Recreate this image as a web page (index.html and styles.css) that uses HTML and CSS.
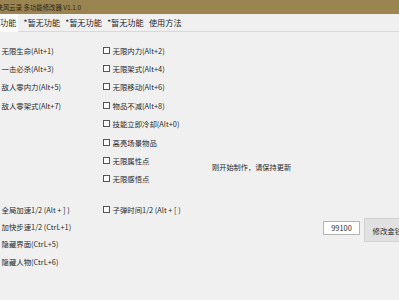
FILE: index.html
```html
<!DOCTYPE html>
<html lang="zh">
<head>
<meta charset="utf-8">
<link rel="stylesheet" href="styles.css">
</head>
<body>
<div class="window">
  <div class="titlebar"><span class="title">侠风云录 多功能修改器 V1.1.0</span></div>
  <div class="tabs">
    <div class="tab active">功能</div>
    <div class="tab">*暂无功能</div>
    <div class="tab">*暂无功能</div>
    <div class="tab">*暂无功能</div>
    <div class="tab">使用方法</div>
  </div>
  <div class="content">
    <div class="section s1">
      <div class="col col1">
        <div class="row">无限生命(Alt+1)</div>
        <div class="row">一击必杀(Alt+3)</div>
        <div class="row">敌人零内力(Alt+5)</div>
        <div class="row">敌人零架式(Alt+7)</div>
      </div>
      <div class="col col2">
        <label class="row"><span class="box"></span>无限内力(Alt+2)</label>
        <label class="row"><span class="box"></span>无限架式(Alt+4)</label>
        <label class="row"><span class="box"></span>无限移动(Alt+6)</label>
        <label class="row"><span class="box"></span>物品不减(Alt+8)</label>
        <label class="row"><span class="box"></span>技能立即冷却(Alt+0)</label>
        <label class="row"><span class="box"></span>高亮场景物品</label>
        <label class="row"><span class="box"></span>无限属性点</label>
        <label class="row"><span class="box"></span>无限感悟点</label>
      </div>
      <div class="col col3">
        <div class="msg">刚开始制作，请保持更新</div>
      </div>
    </div>
    <div class="section s2">
      <div class="col col1">
        <div class="row2">全局加速1/2 (Alt + ] )</div>
        <div class="row2">加快步速1/2 (CtrL+1)</div>
        <div class="row2">隐藏界面(CtrL+5)</div>
        <div class="row2">隐藏人物(CtrL+6)</div>
      </div>
      <div class="col col2">
        <label class="row2"><span class="box"></span>子弹时间1/2 (Alt + [ )</label>
      </div>
      <div class="col col3">
        <div class="money">
          <div class="input">99100</div>
          <div class="btn">修改金钱</div>
        </div>
      </div>
    </div>
  </div>
</div>
</body>
</html>
```
FILE: styles.css
```css
html, body {
  margin: 0;
  padding: 0;
  width: 399px;
  height: 300px;
  overflow: hidden;
  background: #f0f0f0;
}
.window {
  font-family: "Noto Sans CJK SC", "Noto Sans", sans-serif;
  color: #2a2a2a;
  width: 399px;
  height: 300px;
  overflow: hidden;
}
.titlebar {
  height: 14px;
  background: #9a8450;
  display: flex;
  align-items: center;
  white-space: nowrap;
}
.title {
  margin-left: -3.5px;
  font-size: 6.4px;
  color: #2e2614;
}
.tabs {
  height: 17px;
  display: flex;
  align-items: stretch;
  border-bottom: 1px solid #d9d9d9;
  white-space: nowrap;
}
.tab {
  font-size: 8.2px;
  line-height: 17px;
  padding: 0 2.6px;
}
.tab.active {
  background: #fff;
  padding: 0 3px 0 0;
  width: 15px;
  margin-bottom: -1px;
}
.tab:nth-child(2) { margin-left: 3px; }
.content {
  padding-top: 9px;
}
.section {
  display: grid;
  grid-template-columns: 100px 110px 1fr;
}
.s2 {
  margin-top: 12.4px;
}
.col {
  display: flex;
  flex-direction: column;
}
.col1 { padding-left: 1.5px; }
.col2 { padding-left: 2.5px; }
.row, .row2 {
  font-size: 7.4px;
  display: flex;
  align-items: center;
  white-space: nowrap;
}
.row { height: 18.4px; }
.row2 { height: 17.3px; }
.box {
  width: 5px;
  height: 5px;
  border: 1px solid #555;
  background: #fff;
  margin-right: 3px;
  flex: none;
}
.col3 {
  padding-left: 2px;
}
.s1 .col3 {
  justify-content: flex-end;
  padding-bottom: 15px;
}
.msg {
  font-size: 7.2px;
  line-height: 12px;
  white-space: nowrap;
}
.money {
  display: flex;
  align-items: flex-start;
  margin-top: 17.6px;
  padding-left: 111px;
}
.input {
  margin-top: 2.4px;
  width: 35px;
  height: 12.6px;
  border: 1px solid #b5b5b5;
  background: #fff;
  font-size: 7.4px;
  line-height: 12px;
  text-align: center;
  box-sizing: content-box;
}
.btn {
  margin-left: 4px;
  width: 50px;
  height: 22px;
  border: 1px solid #d0d0d0;
  background: #e1e1e1;
  font-size: 7.4px;
  line-height: 24px;
  padding-left: 7.5px;
  white-space: nowrap;
  flex: none;
}
```
